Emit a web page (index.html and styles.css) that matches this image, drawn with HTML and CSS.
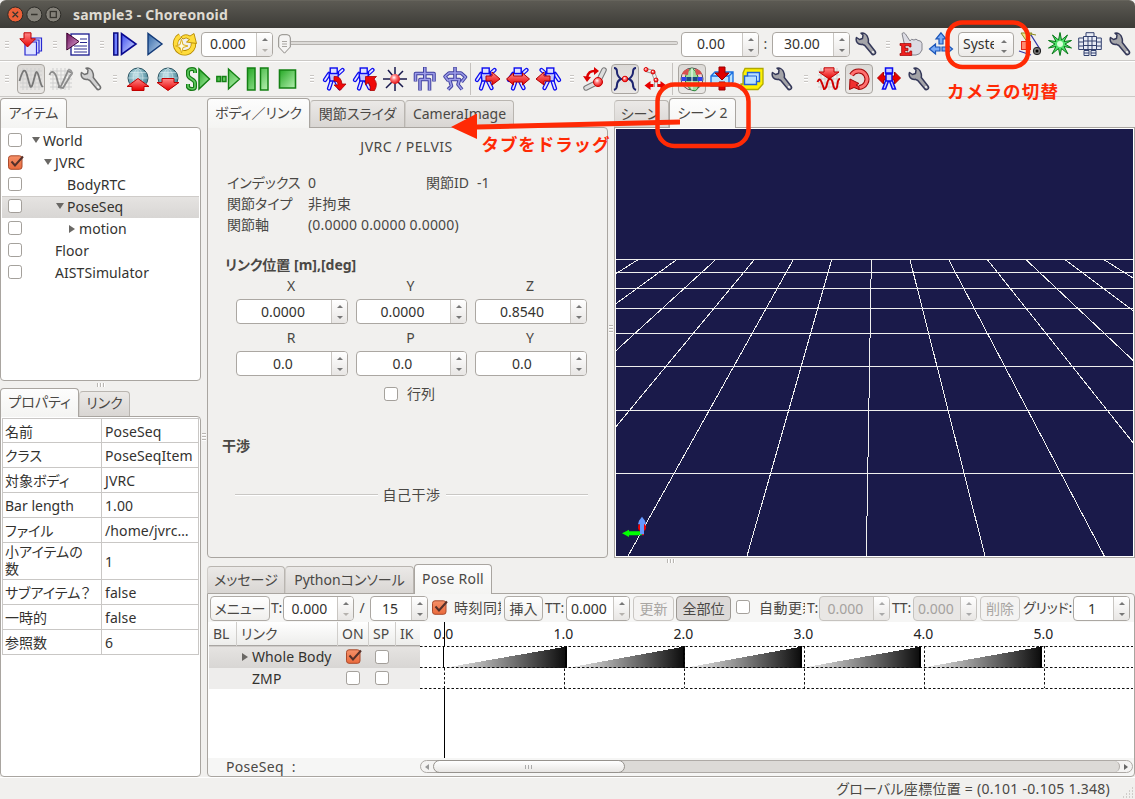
FILE: index.html
```html
<!DOCTYPE html>
<html lang="ja">
<head>
<meta charset="utf-8">
<title>sample3 - Choreonoid</title>
<link rel="stylesheet" href="styles.css">
</head>
<body>
<svg class="defs" width="0" height="0">
  <defs>
    <linearGradient id="gRed" x1="0" y1="0" x2="0" y2="1"><stop offset="0" stop-color="#ff8a8a"/><stop offset="1" stop-color="#e80000"/></linearGradient>
    <linearGradient id="gGreen" x1="0" y1="0" x2="1" y2="1"><stop offset="0" stop-color="#25a825"/><stop offset="1" stop-color="#b5f0b0"/></linearGradient>
    <linearGradient id="gBlue" x1="0" y1="0" x2="1" y2="1"><stop offset="0" stop-color="#3b4cf0"/><stop offset="1" stop-color="#dfe6ff"/></linearGradient>
    <linearGradient id="gSteel" x1="0" y1="0" x2="1" y2="1"><stop offset="0" stop-color="#2f66a8"/><stop offset="1" stop-color="#c5d8ee"/></linearGradient>
    <linearGradient id="gPurple" x1="0" y1="0" x2="1" y2="1"><stop offset="0" stop-color="#6b1058"/><stop offset="1" stop-color="#e0a8d8"/></linearGradient>
    <radialGradient id="gBall" cx=".4" cy=".35" r=".7"><stop offset="0" stop-color="#fff"/><stop offset=".35" stop-color="#ff8080"/><stop offset="1" stop-color="#e00000"/></radialGradient>
    <radialGradient id="gGlobe" cx=".4" cy=".35" r=".7"><stop offset="0" stop-color="#c8e4ea"/><stop offset="1" stop-color="#3d7f92"/></radialGradient>
    <linearGradient id="ramp" x1="0" x2="1"><stop offset="0" stop-color="#f4f4f4"/><stop offset="1" stop-color="#0a0a0a"/></linearGradient>
    <linearGradient id="check" x1="0" y1="0" x2="0" y2="1"><stop offset="0" stop-color="#f59068"/><stop offset="1" stop-color="#ea6a3c"/></linearGradient>
    <symbol id="wrench" viewBox="0 0 24 24"><path d="M7 1.2 9 3 8.500 6.500 5.500 7.500 2.500 5.500C1.200 9.500 4 13 8.500 12.300L10.800 13.500 17.500 21.500C19 23.800 22.500 22.300 21.300 19.500L14.300 10.500C14.300 9 14.800 8.500 14 6 13 2.500 10 .6 7 1.200Z" stroke-width="1.500" stroke-linejoin="round"/><circle cx="19" cy="20" r=".9" fill="#fff" stroke="none"/></symbol>
    <symbol id="robot" viewBox="0 0 24 24"><g fill="none" stroke-linecap="round" stroke-linejoin="round"><path d="M7 7 3 13M16 7 20.500 3M9.500 14 7 21.500M14 14l3.500 7" stroke="#0b0bf0" stroke-width="4.200"/><path d="M7 7 3 13M16 7 20.500 3M9.500 14 7 21.500M14 14l3.500 7" stroke="#e3e5ff" stroke-width="1.700"/></g><path d="M7 5.500h9.500l-1 8.500H8z" fill="#c3c6ff" stroke="#0b0bf0" stroke-width="1.400"/><rect x="8.200" y="1" width="7" height="5.500" fill="#dfe1ff" stroke="#0b0bf0" stroke-width="1.400"/></symbol>
    <symbol id="globe" viewBox="0 0 24 24"><circle cx="12" cy="11" r="10" fill="url(#gGlobe)" stroke="#2d5665"/><path d="M12 1v20M2 11h20M4 5.500h16M4 16.500h16M12 1C5.500 6 5.500 16 12 21M12 1c6.500 5 6.500 15 0 20" fill="none" stroke="#e3f2f5" stroke-width=".7" opacity=".75"/></symbol>
    <symbol id="box" viewBox="0 0 15 15"><rect x=".5" y=".5" width="14" height="14" rx="2.500" fill="#fff" stroke="#9a9690"/></symbol>
    <symbol id="boxon" viewBox="0 0 16 15"><rect x=".5" y=".8" width="13.500" height="13.500" rx="2.500" fill="url(#check)" stroke="#a84a2c"/><path d="M3.500 6.500 7 10.500 15 1.500" fill="none" stroke="#54302a" stroke-width="2"/></symbol>
    <symbol id="grid" viewBox="0 0 24 24"><path d="M1 4h22M1 8h22M1 12h22M1 16h22M1 20h22M4 1v22M8 1v22M12 1v22M16 1v22M20 1v22" stroke="#cfcfcf" fill="none" stroke-width="1"/></symbol>
  </defs>
</svg>

<div class="window">
  <header class="titlebar">
    <svg width="64" height="28"><g stroke="#2c2b27"><circle cx="15.300" cy="14.500" r="7.500" fill="#ec6038"/><circle cx="34.300" cy="14.500" r="7.500" fill="#85827a"/><circle cx="53.300" cy="14.500" r="7.500" fill="#85827a"/></g><g fill="none" stroke="#37352f" stroke-width="1.300"><path d="m12.500 11.700 5.600 5.600m0-5.600-5.600 5.600M31 14.500h6.600"/><rect x="50.300" y="11.500" width="6" height="6"/></g></svg>
    <span class="title">sample3 - Choreonoid</span>
  </header>

  <div class="toolbar">
    <i class="grip first"></i>
    <span class="ic"><svg viewBox="0 0 24 24"><g fill="#dfe4ff" stroke="#2828d0" stroke-width="1.200"><path d="M12 6h10.500v13H12z"/><path d="M9 8h11v13H9z"/><path d="M6 10h11.500v13H6z"/></g><path d="M5 .8h7v6h4.500L8.500 15 .8 6.800H5z" fill="url(#gRed)" stroke="#c00000"/></svg></span>
    <i class="grip"></i>
    <span class="ic"><svg viewBox="0 0 24 24"><rect x="5" y="2" width="18" height="21" fill="#fff" stroke="#1a1a90" stroke-width="1.300"/><path d="M14 7h7M14 10.500h7M8 14h13M8 17h13M8 20h13" stroke="#2a2a90"/><path d="M.8 1v17L13 9.500z" fill="url(#gPurple)" stroke="#3c0030"/></svg></span>
    <i class="grip"></i>
    <span class="ic"><svg viewBox="0 0 24 24"><rect x=".8" y="1" width="4" height="22" fill="#6f80ff" stroke="#0a0a80" stroke-width="1.500"/><path d="M8.500 1.500v21L23 12z" fill="url(#gBlue)" stroke="#0a0a90" stroke-width="1.600"/></svg></span>
    <span class="ic"><svg viewBox="0 0 24 24"><path d="M5 1.500v21L19 12z" fill="url(#gSteel)" stroke="#123a78" stroke-width="1.400"/></svg></span>
    <span class="ic"><svg viewBox="0 0 24 24"><path d="M7 4A9 9 0 1 0 20.500 11" fill="none" stroke="#b58900" stroke-width="5.500"/><path d="M7 4A9 9 0 1 0 20.500 11" fill="none" stroke="#ffdc3c" stroke-width="3.800"/><path d="M8 5Q12 1 17 4l4-2.500 2.500 10-10-1.500 3-2.500Q13 4.500 10 7z" fill="#ffdc3c" stroke="#b58900" stroke-width=".9"/><path d="m8.500 7 1.500 5.700L15 14l-5 1.500L8.500 21 7 15.500 2.500 14 7 12.700z" fill="#fffbe0" stroke="#dbae1d"/></svg></span>
    <span class="spin w72 ml1"><b>0.000</b><i class="ar dn-off"></i></span>
    <span class="slider"><i class="track"></i><svg width="13" height="20" viewBox="0 0 13 20"><path d="M4 .7h5q3.300 0 3.300 3.300v9L6.500 19.200.7 13V4Q.7.700 4 .7z" fill="#f5f4f3" stroke="#8d8a86"/><path d="M4 7.500h5M4 10h5M4 12.500h5" stroke="#a9a6a2"/></svg></span>
    <span class="spin w78"><b>0.00</b><i class="ar"></i></span>
    <span class="colon">:</span>
    <span class="spin w78"><b>30.00</b><i class="ar"></i></span>
    <span class="ic ml1"><svg class="tool"><use href="#wrench"/></svg></span>
    <i class="grip narrow"></i>
    <span class="ic"><svg viewBox="0 0 24 24"><path d="M3 1.500Q5-.5 6.500 2L11 9q1-3 4-1 2-2 4 .5 3-.5 4 3V18q-2 5-6 5h-7L6 15z" fill="#dcdce4" stroke="#84848c"/><path d="M1 11.500h11V15H10.500L10 13.700H6v2.600h3V18.500H6v2.300h4.500L11 19h1.700v4.500H1v-2h1.600v-8H1z" fill="#f02020" stroke="#a00000" stroke-width=".7"/></svg></span>
    <span class="ic"><svg viewBox="0 0 24 24"><path d="m12 .8 5 6h-3V12h-4V6.800H7zM.5 17l6-5v3H11v4H6.500v3zM23.500 17l-6-5v3H13v4h4.500v3z" fill="#79aaf5" stroke="#1a55b8" stroke-width="1.200"/></svg></span>
    <span class="combo"><b>Syste</b><i class="ar"></i></span>
    <span class="ic"><svg viewBox="0 0 24 24"><path d="M3 1h11L8.500 9zM8 1l10 2" fill="#eee68a" stroke="#8e8c20"/><rect x="3.500" y="9.500" width="9" height="8" fill="#ff8b70" stroke="#e02818"/><path d="m13 3 9.500 15M1 19l12 4" stroke="#3035a5" stroke-width="1.300" fill="none"/><circle cx="19" cy="19" r="3.700" fill="#777" stroke="#222"/><circle cx="19" cy="19" r="1.500"/></svg></span>
    <span class="ic"><svg viewBox="0 0 24 24"><path d="m12 .5 1.500 7.500L19.500 3 16 9.500l7.500-1L17 12l6.500 4-7.500-1.500L20 22l-6.500-5.500L12 23.500 10.500 16.500 4 22l4-7.500L.5 16 7 12 .5 8.500l7.500 1L4.500 3l6 5z" fill="#4fe06a" stroke="#087818" stroke-linejoin="round"/><circle cx="12" cy="12" r="3" fill="#d8ffd8"/></svg></span>
    <span class="ic"><svg viewBox="0 0 24 24"><g fill="#e8ecf6" stroke="#33406e"><path d="M8 .7h8v3.800H8zM5.500 4.500h13v13h-13zM.7 6h4.800v11.500H.7zM18.500 6h4.800v11.500h-4.800zM6 18.500h5v5H6zM13 18.500h5v5h-5z"/><path d="M5.500 9h13M5.500 13.500h13M10 4.500v13M14 4.500v13M1 10h4M1 14h4M19 10h4M19 14h4M6 21h5M13 21h5" fill="none"/></g></svg></span>
    <span class="ic"><svg class="tool"><use href="#wrench"/></svg></span>
  </div>

  <div class="toolbar second">
    <i class="grip first"></i>
    <span class="ic on"><svg viewBox="0 0 24 24"><use href="#grid"/><path d="M.5 14C3 5 5.500-1 8 8s3.500 17 6 8 3-14 5-9 3 14 5 12" fill="none" stroke="#777" stroke-width="1.800"/></svg></span>
    <span class="ic"><svg viewBox="0 0 24 24"><use href="#grid"/><path d="M.5 8C2 3 6 4 8 12s3 10 5 5L19 4l4 2-9 15-5-1" fill="none" stroke="#8a8a8a" stroke-width="1.800"/><path d="M19 3q4-1 4 4l-3 3" fill="none" stroke="#999" stroke-width="1.500"/></svg></span>
    <span class="ic"><svg class="tool grey"><use href="#wrench"/></svg></span>
    <i class="grip"></i>
    <span class="ic"><svg viewBox="0 0 24 24"><use href="#globe"/><path d="m12 11.500 11 8h-5v4H6v-4H1z" fill="url(#gRed)" stroke="#c00000"/></svg></span>
    <span class="ic"><svg viewBox="0 0 24 24"><use href="#globe"/><path d="m12 23.500 11-8h-5v-4H6v4H1z" fill="url(#gRed)" stroke="#c00000"/></svg></span>
    <span class="ic"><svg viewBox="0 0 24 24"><path d="M9 6V4Q9 2 6 2T2 4v4q0 2 3.500 4T9 16v4q0 2-3 2t-4-2v-3" fill="none" stroke="#187a18" stroke-width="4"/><path d="M9 6V4Q9 2 6 2T2 4v4q0 2 3.500 4T9 16v4q0 2-3 2t-4-2v-3" fill="none" stroke="#60cc60" stroke-width="1.600"/><path d="M13 2v20l10.500-10z" fill="url(#gGreen)" stroke="#148014" stroke-width="1.500"/></svg></span>
    <span class="ic"><svg viewBox="0 0 24 24"><path d="M.8 9.500h3.700v5H.8zM6.300 9.500H10v5H6.300zM12.500 2v20L23.500 12z" fill="url(#gGreen)" stroke="#148014" stroke-width="1.400"/></svg></span>
    <span class="ic"><svg viewBox="0 0 24 24"><path d="M1.500 1h7.500v22H1.500zM14.500 1H22v22h-7.500z" fill="url(#gGreen)" stroke="#148014" stroke-width="1.500"/></svg></span>
    <span class="ic"><svg viewBox="0 0 24 24"><path d="M3.500 3h16v18h-16z" fill="url(#gGreen)" stroke="#148014" stroke-width="1.600"/></svg></span>
    <i class="grip"></i>
    <span class="ic"><svg viewBox="0 0 24 24"><use href="#robot" x="-1"/><path d="M11 9.500q7-1 8 7.500h4l-6 6.500-6-5.500h4q0-4.500-4-4z" fill="#f00808" stroke="#a00" stroke-width=".8"/></svg></span>
    <span class="ic"><svg viewBox="0 0 24 24"><use href="#robot" x="-1"/><path d="M17 23.500h4.500q4-7-.500-11.500l2.500-2.500H12.500V18l2.800-2.500q3 3.500 1.700 8z" fill="#f00808" stroke="#a00" stroke-width=".8"/></svg></span>
    <span class="ic"><svg viewBox="0 0 24 24"><path d="M12 0v24M0 12h24M3 21 20 4M5 3l5 6M14 14l6 6" stroke="#18184c" stroke-width="1.500"/><circle cx="12" cy="12" r="5" fill="url(#gBall)"/></svg></span>
    <span class="ic"><svg viewBox="0 0 24 24"><g fill="none" stroke-linejoin="round"><path d="M2.500 14.500V6.500h18.500v8M7 23.500V12.500h9.500v11M11.800 0v12" stroke="#4040a0" stroke-width="3.600"/><path d="M2.500 14V6.500h18.500V14M7 23V12.500h9.500V23M11.800 .5v12" stroke="#9c9ce8" stroke-width="1.600"/></g></svg></span>
    <span class="ic"><svg viewBox="0 0 24 24"><g fill="none" stroke-linejoin="round"><path d="M5.500 14 2 9.500l4-3.500h12l4.500 4-4 5M12 0v12M5 22.500l3.500-3.500-2-6.500h10l-1.500 5 4 5" stroke="#4040a0" stroke-width="3.600"/><path d="M5.500 14 2 9.500l4-3.500h12l4.500 4-4 5M12 .5v12M5 22.500l3.500-3.500-2-6.500h10l-1.500 5 4 5" stroke="#9c9ce8" stroke-width="1.600"/></g></svg></span>
    <i class="sep"></i>
    <span class="ic"><svg viewBox="0 0 24 24"><use href="#robot" x="-2"/><path d="M10 9h6V5l8 7-8 6v-4h-6z" fill="url(#gRed)" stroke="#b00000"/></svg></span>
    <span class="ic"><svg viewBox="0 0 24 24"><use href="#robot"/><path d="m.5 12 7-6v3h9V6l7 6-7 6v-3h-9v3z" fill="url(#gRed)" stroke="#b00000"/></svg></span>
    <span class="ic"><svg viewBox="0 0 24 24"><use href="#robot" transform="translate(26 0) scale(-1 1)"/><path d="M14 9H8V5l-8 7 8 6v-4h6z" fill="url(#gRed)" stroke="#b00000"/></svg></span>
    <i class="grip"></i>
    <span class="ic"><svg viewBox="0 0 24 24"><path d="M3 21 15 15 21 3" fill="none" stroke="#777" stroke-width="5.500" stroke-linecap="round"/><path d="M3 21 15 15 21 3" fill="none" stroke="#ddd" stroke-width="3.500" stroke-linecap="round"/><circle cx="15" cy="15" r="4.500" fill="url(#gBall)" stroke="#c00"/><path d="M4 11Q5 3 13 4" fill="none" stroke="#d00" stroke-width="2.500"/><path d="m11 0 5 4-5 4zM0 9l8 1-4 5z" fill="#d00"/></svg></span>
    <span class="ic on"><svg viewBox="0 0 24 24"><path d="M1 1Q4 1 4 5t4 7Q4 14 4 18t-3 5M23 1q-3 0-3 4t-4 7q4 2 4 6t3 5M8 12h8" fill="none" stroke="#1d2470" stroke-width="2"/><circle cx="12" cy="12" r="2.800" fill="url(#gBall)" stroke="#d00"/></svg></span>
    <span class="ic"><svg viewBox="0 0 24 24"><path d="M3 3 10 5 13 13v7" fill="none" stroke="#999" stroke-width="4"/><path d="M3 3 10 5 13 13v7" fill="none" stroke="#eee" stroke-width="2.200"/><g fill="url(#gBall)" stroke="#d00"><circle cx="3" cy="2.500" r="2"/><circle cx="10" cy="5" r="2"/><circle cx="13" cy="13" r="2"/></g><path d="m1.500 18.500 6-4.500v3h3v3h-3v3zM23.500 18.500l-6-4.500v3h-3v3h3v3z" fill="#e80000"/></svg></span>
    <i class="sep wide"></i>
    <span class="ic on"><svg viewBox="0 0 24 24"><circle cx="12" cy="12" r="11" fill="#f8d0d0" stroke="#555"/><path d="M12 1C3 6 3 18 12 23s9-17 0-22z" fill="#a0dca0" stroke="#208030"/><path d="M2 7Q4 2 9 2L8 8zM22 7q-2-5-7-5l1 6z" fill="#d85050"/><path d="M1.500 10h5v4h-5zM17.500 10h5v4h-5z" fill="#3040f0"/><path d="M6.500 10h11v4h-11z" fill="#1a4a80"/><path d="M12 1v22" stroke="#fff"/></svg></span>
    <span class="ic"><svg viewBox="0 0 24 24"><path d="m1 9 4-4h18v10l-4 4H1zM1 9h18v10M19 9l4-4" fill="#b8e2ff" stroke="#1c70e0" stroke-width="1.400"/><path d="M9 0h6v6h4l-7 7-7-7h4zM9 15h6v8H9z" fill="#e00000" stroke="#900"/></svg></span>
    <span class="ic"><svg viewBox="0 0 24 24"><path d="M5 1.500h18V17l-5 5.500H1V17h2V6z" fill="#fff200" stroke="#b0a800" stroke-width="1.300"/><path d="M7.500 5.500h12v9h-3v3H4.500V9h3z" fill="#b9e0ff" stroke="#2060d8" stroke-width="1.400"/><path d="M8 9h8.500v5.500" fill="none" stroke="#2060d8"/></svg></span>
    <span class="ic"><svg class="tool"><use href="#wrench"/></svg></span>
    <i class="grip"></i>
    <span class="ic"><svg viewBox="0 0 24 24"><use href="#grid"/><path d="M.5 15q2-5 4 0t2.500 7q2 0 3-5t3-5 3 5 2.500 5 2-5 2.500-5" fill="none" stroke="#d00000" stroke-width="2"/><path d="M7 .8h10V5h5l-10 7L2 5h5z" fill="url(#gRed)" stroke="#c00000"/></svg></span>
    <span class="ic on"><svg viewBox="0 0 24 24"><path d="M4.500 8A8.300 8.300 0 1 1 12 20.500" fill="none" stroke="#a00808" stroke-width="5"/><path d="M4.500 8A8.300 8.300 0 1 1 12 20.500" fill="none" stroke="#ff7070" stroke-width="3"/><path d="m2.500 22.500.500-10.500 9 4.500-3 1.500 3 1.500v3L7 20.500z" fill="#f03030" stroke="#a00808"/></svg></span>
    <span class="ic"><svg viewBox="0 0 24 24"><path d="m.5 11 6-6v4h11V5l6 6-6 6v-4h-11v4z" fill="#e80000" stroke="#a00"/><g fill="#c8ccff" stroke="#0b0bf0" stroke-width="1.500"><path d="M8.500 1h7v5h-7zM9 7h6v7H9zM8.500 14 5.500 22h3l3-8zM15.500 14l3 8h-3l-3-8z"/></g></svg></span>
    <span class="ic"><svg class="tool"><use href="#wrench"/></svg></span>
  </div>

  <main class="main">
    <aside class="left">
      <div class="tabs"><span class="tab active t-item">アイテム</span></div>
      <section class="panel tree">
        <div class="row"><svg class="cb"><use href="#box"/></svg><i class="open"></i>World</div>
        <div class="row l1"><svg class="cb ck"><use href="#boxon"/></svg><i class="open"></i>JVRC</div>
        <div class="row l2"><svg class="cb"><use href="#box"/></svg><i class="none"></i>BodyRTC</div>
        <div class="row l2 sel"><svg class="cb"><use href="#box"/></svg><i class="open"></i>PoseSeq</div>
        <div class="row l3"><svg class="cb"><use href="#box"/></svg><i class="shut"></i>motion</div>
        <div class="row l1"><svg class="cb"><use href="#box"/></svg><i class="none"></i>Floor</div>
        <div class="row l1"><svg class="cb"><use href="#box"/></svg><i class="none"></i>AISTSimulator</div>
      </section>
      <div class="hhandle"><i></i></div>
      <div class="tabs small"><span class="tab active t-prop">プロパティ</span><span class="tab t-link">リンク</span></div>
      <section class="panel props">
        <div class="prop"><span>名前</span><span>PoseSeq</span></div>
        <div class="prop"><span>クラス</span><span>PoseSeqItem</span></div>
        <div class="prop"><span>対象ボディ</span><span>JVRC</span></div>
        <div class="prop"><span>Bar length</span><span>1.00</span></div>
        <div class="prop"><span>ファイル</span><span>/home/jvrc…</span></div>
        <div class="prop tall"><span>小アイテムの<br>数</span><span>1</span></div>
        <div class="prop"><span>サブアイテム？</span><span>false</span></div>
        <div class="prop"><span>一時的</span><span>false</span></div>
        <div class="prop"><span>参照数</span><span>6</span></div>
      </section>
    </aside>
    <div class="vhandle v1"><i></i></div>

    <div class="right">
      <div class="upper">
        <div class="center">
          <div class="tabs"><span class="tab active t-body">ボディ／リンク</span><span class="tab t-joint">関節スライダ</span><span class="tab t-cam">CameraImage</span></div>
          <section class="panel form">
            <div class="ftitle">JVRC / PELVIS</div>
            <div class="info"><span>インデックス</span><span>0</span><span>関節ID</span><span>-1</span></div>
            <div class="info"><span>関節タイプ</span><span class="kj">非拘束</span></div>
            <div class="info"><span>関節軸</span><span class="vec">(0.0000 0.0000 0.0000)</span></div>
            <div class="fhead">リンク位置 [m],[deg]</div>
            <div class="axes"><span>X</span><span>Y</span><span>Z</span></div>
            <div class="trio"><span class="spin"><b>0.0000</b><i class="ar"></i></span><span class="spin"><b>0.0000</b><i class="ar"></i></span><span class="spin"><b>0.8540</b><i class="ar"></i></span></div>
            <div class="axes next"><span>R</span><span>P</span><span>Y</span></div>
            <div class="trio"><span class="spin"><b>0.0</b><i class="ar"></i></span><span class="spin"><b>0.0</b><i class="ar"></i></span><span class="spin"><b>0.0</b><i class="ar"></i></span></div>
            <div class="matrix"><svg class="cb"><use href="#box"/></svg>行列</div>
            <div class="fhead2">干渉</div>
            <div class="rule"><i></i><span class="kj">自己干渉</span><i></i></div>
          </section>
        </div>
        <div class="vhandle v2"><i></i></div>
        <div class="scene">
          <div class="tabs"><span class="tab t-s1">シーン</span><span class="tab active t-s2">シーン 2</span></div>
          <section class="panel view">
            <svg width="517" height="427" viewBox="18 -333 1551 1281">
              <g stroke="#efefef" stroke-width="3" fill="none" shape-rendering="crispEdges">
                <path d="M18 58.500H1569M18 97.500H1569M18 145.500H1569M18 205.500H1569M18 280.500H1569M18 379.500H1569M18 511.500H1569M18 700.500H1569"/>
                <path d="M84 59 18 101M200 59 18 191M317 59 18 332M433 59 18 560M550 59 54 948M665 59 411 948M784 59 769 948M900 59l225 889M1016 59l467 889M1132 59l437 549M1248 59l321 302M1365 59l204 153M1482 59l87 55"/>
              </g>
              <g><circle cx="96" cy="862" r="12" fill="#f00000"/><path d="M96 880h6v6h-6z" fill="#f00"/><path d="M36 880l21-11v5h38v12H57v5z" fill="#0f0"/><path d="M96 830l9 12 3 11h-6v30H90v-30h-6l3-11z" fill="#6699ff"/></g>
            </svg>
          </section>
        </div>
      </div>
      <div class="hhandle h2"><i></i></div>
      <div class="lower">
        <div class="tabs"><span class="tab t-msg">メッセージ</span><span class="tab t-py">Pythonコンソール</span><span class="tab active t-pose">Pose Roll</span></div>
        <section class="panel roll">
          <div class="rollbar">
            <span class="btn c1">メニュー</span><span class="lb c2">T:</span><span class="spin c3"><b>0.000</b><i class="ar dn-off"></i></span><span class="lb c4">/</span><span class="spin c5"><b>15</b><i class="ar"></i></span>
            <svg class="cb ck c6"><use href="#boxon"/></svg><span class="lb c7">時刻同期</span><span class="btn c8">挿入</span><span class="lb c9">TT:</span><span class="spin c10"><b>0.000</b><i class="ar dn-off"></i></span><span class="btn off c11">更新</span><span class="btn pressed c12">全部位</span>
            <svg class="cb c13"><use href="#box"/></svg><span class="lb c14">自動更新</span><span class="lb c15">T:</span><span class="spin off c16"><b>0.000</b><i class="ar"></i></span><span class="lb c17">TT:</span><span class="spin off c18"><b>0.000</b><i class="ar"></i></span><span class="btn off c19">削除</span><span class="lb c20">グリッド:</span><span class="spin c21"><b>1</b><i class="ar"></i></span>
          </div>
          <div class="rollbody">
            <div class="parts">
              <div class="phead"><span>BL</span><span>リンク</span><span>ON</span><span>SP</span><span>IK</span></div>
              <div class="prow sel"><i class="shut"></i><span>Whole Body</span><svg class="cb ck"><use href="#boxon"/></svg><svg class="cb"><use href="#box"/></svg></div>
              <div class="prow"><i class="none"></i><span>ZMP</span><svg class="cb"><use href="#box"/></svg><svg class="cb"><use href="#box"/></svg></div>
            </div>
            <svg class="timeline" width="713" height="136" viewBox="420 622 713 136">
              <g fill="url(#ramp)" shape-rendering="crispEdges"><path d="M446 667.500 567 646.500v21z"/><path d="M569 667.500 685 646.500v21z"/><path d="M687 667.500 802 646.500v21z"/><path d="M804 667.500 921 646.500v21z"/><path d="M923 667.500 1042 646.500v21z"/></g>
              <g shape-rendering="crispEdges" fill="#000"><path d="M565 646h2v22h-2zM683 646h2v22h-2zM800 646h2v22h-2zM919 646h2v22h-2zM1040 646h2v22h-2z"/></g>
              <g stroke="#111" stroke-dasharray="2.500 2" fill="none"><path d="M420 646.500h713M420 667.500h713M420 688.500h713M444.500 668v20M564.500 646v42M684.500 646v42M804.500 646v42M924.500 646v42M1044.500 646v42"/></g>
              <path d="M444.500 622v24M443.500 646v22M444.500 688v70" stroke="#000"/>
              <g class="ticks"><text x="443.500" y="639">0.0</text><text x="563.500" y="639">1.0</text><text x="683.500" y="639">2.0</text><text x="803.500" y="639">3.0</text><text x="923.500" y="639">4.0</text><text x="1043.500" y="639">5.0</text></g>
            </svg>
          </div>
          <div class="rollfoot"><span class="fname">PoseSeq&nbsp; :</span><span class="scroll"><i class="sl"></i><i class="thumb"><u></u></i><i class="rest"></i><i class="sr"></i></span></div>
        </section>
      </div>
    </div>
  </main>
  <footer class="status"><span>グローバル座標位置 = (0.101 -0.105 1.348)</span><svg width="12" height="12"><path d="M10 1h1M7 4h1m2 0h1M4 7h1m2 0h1m2 0h1M1 10h1m2 0h1m2 0h1m2 0h1" stroke="#c4c1bd" stroke-width="1.500"/></svg></footer>

  <svg class="notes" width="1135" height="799">
    <g fill="none" stroke="#ff2a05" stroke-width="4.500"><rect x="947.500" y="22.500" width="80.500" height="44.500" rx="15"/><rect x="657.500" y="84.500" width="91" height="61.500" rx="17"/></g>
    <path d="M451 127 477 113.500v11L680 119.500v5L477 129.500V139z" fill="#ff2a05"/>
    <text x="481.500" y="150.500" textLength="128">タブをドラッグ</text>
    <text x="947" y="98" textLength="111">カメラの切替</text>
  </svg>
</div>
</body>
</html>
```
FILE: styles.css
```css
* { box-sizing: border-box; }
body { margin: 0; overflow: hidden; }
.defs { position: absolute; }
.window {
  position: relative; width: 1135px; height: 799px; display: flex; flex-direction: column;
  background: #f1f0ee; color: #4a4845; overflow: hidden;
  font: 14px/20px "Noto Sans", "Noto Sans CJK JP", sans-serif; font-feature-settings: "palt"; white-space: nowrap;
}
i { font-style: normal; flex: none; }
b { font-weight: normal; }
svg { display: block; flex: none; }

.titlebar { height: 28px; display: flex; background: linear-gradient(#5c5a53, #3c3b37); border-top: 1px solid #66645c; border-radius: 6px 6px 0 0; }
.titlebar svg { margin-top: -1px; }
.title { margin-left: 9px; line-height: 27px; font-weight: bold; color: #dfdbd2; letter-spacing: .2px; }

.toolbar { height: 33px; display: flex; align-items: center; border-bottom: 1px solid #cbc9c6; }
.toolbar.second { height: 36px; border-top: 1px solid #fff; padding-bottom: 1px; }
.grip { width: 17px; height: 9px; background: linear-gradient(#c9c6c3 1px, #fff 1px 2px, transparent 2px) 7px 1px / 4px 3px repeat-y; background-clip: content-box; }
.grip.first { width: 16px; background-position-x: 5px; }
.grip.narrow { width: 15px; background-position-x: 5px; }
.ic { flex: none; width: 30px; height: 30px; display: flex; align-items: center; justify-content: center; }
.ic svg { width: 24px; height: 24px; overflow: visible; }
.ic.on { width: 28px; margin: 0 1px; border: 1px solid #a9a5a0; border-radius: 4px; background: linear-gradient(#dcdad7, #eae8e6); }
.tool { fill: #a4a4a8; stroke: #343859; }
.tool.grey { fill: #d2d2d2; stroke: #707070; }
.sep { width: 3px; height: 32px; border-left: 1px solid #c4c1be; }
.sep.wide { width: 5px; margin-left: 2px; }
.ml1 { margin-left: 1px; }
.w72 { width: 72px; }
.w78 { width: 78px; }

.spin { flex: none; display: flex; height: 25px; border: 1px solid #aba7a2; border-radius: 4px; background: #fff; overflow: hidden; color: #33322f; }
.spin b { flex: 1; text-align: center; line-height: 23px; padding-right: 2px; }
.toolbar .spin b { line-height: 22px; }
.ar { width: 16px; border-left: 1px solid #c9c6c2; background: linear-gradient(#fff, #e8e6e4); display: flex; flex-direction: column; align-items: center; justify-content: space-between; padding: 5px 0 4px; }
.ar::before, .ar::after { content: ""; border: 3px solid transparent; }
.ar::before { border-top: 0; border-bottom-color: #777; }
.ar::after { border-bottom: 0; border-top-color: #777; }
.ar.dn-off::after { border-top-color: #b5b2ae; }
.spin.off { background: #e9e7e5; border-color: #c6c3bf; color: #a5a29f; }
.spin.off .ar::before { border-bottom-color: #aaa; }
.spin.off .ar::after { border-top-color: #aaa; }
.slider { width: 400px; margin: 0 3px 0 5px; height: 20px; display: flex; align-items: center; }
.slider svg { order: -1; }
.track { flex: 1; height: 4px; border: 1px solid #b5b2ae; border-left: 0; background: #dddbd8; border-radius: 0 3px 3px 0; margin-top: -3px; }
.colon { width: 13px; text-align: center; }
.combo { width: 56px; height: 25px; margin: 0 1px 0 2px; flex: none; display: flex; border: 1px solid #aba7a2; border-radius: 4px; background: linear-gradient(#fff, #eceae8); color: #33322f; }
.combo b { width: 31px; margin-left: 4px; overflow: hidden; line-height: 22px; }
.combo .ar { border: 0; background: none; width: 18px; padding: 7px 0 3px 1px; }

.main { height: 680px; display: flex; }
.left { width: 201px; display: flex; flex-direction: column; }
.tabs { height: 30px; display: flex; align-items: flex-end; }
.tabs.small { height: 28px; }
.tab { flex: none; height: 27px; line-height: 25px; text-align: center; border: 1px solid #b9b5b0; border-bottom: 0; border-left-color: #cfccc8; border-radius: 4px 4px 0 0; background: linear-gradient(#ebe9e7, #d9d6d3); }
.tab.active { height: 30px; line-height: 27px; margin-bottom: -1px; padding-bottom: 1px; position: relative; border-color: #a9a5a0; background: linear-gradient(#fdfdfd, #f4f4f2); }
.small .tab { height: 25px; line-height: 22px; }
.small .tab.active { height: 29px; line-height: 25px; }
.t-item { width: 67px; } .t-prop { width: 79px; } .t-link { width: 51px; }
.t-body { width: 103px; } .t-joint { width: 95px; } .t-cam { width: 109px; }
.t-s1 { width: 55px; padding-right: 3px; } .t-s2 { width: 67px; }
.t-msg { width: 78px; } .t-py { width: 129px; } .t-pose { width: 78px; letter-spacing: .25px; }
.panel { border: 1px solid #a9a5a0; border-radius: 0 4px 4px 4px; }
.hhandle { height: 7px; display: flex; justify-content: center; align-items: center; }
.hhandle i { width: 8px; height: 4px; background: repeating-linear-gradient(90deg, #bab7b3 0 1px, #fff 1px 2px, transparent 2px 3px); }
.vhandle { display: flex; justify-content: center; }
.vhandle i { width: 4px; height: 9px; background: repeating-linear-gradient(#bab7b3 0 1px, #fff 1px 2px, transparent 2px 3px); }
.v1 { width: 6px; padding-top: 336px; }
.v2 { width: 6px; padding-top: 228px; }

.tree { height: 254px; background: #fff; padding: 2px 1px; color: #33322f; letter-spacing: .08px; }
.row { height: 22px; display: flex; align-items: center; padding-left: 6px; }
.cb { width: 14px; height: 14px; }
.cb.ck { width: 16px; height: 15px; }
.row .cb { margin-right: 10px; margin-top: -2px; }
.row .ck { margin-right: 8px; }
.l1 .cb + i { margin-left: 12px; } .l2 .cb + i { margin-left: 24px; } .l3 .cb + i { margin-left: 36px; }
.sel { background: linear-gradient(#e6e4e2, #d8d6d4); box-shadow: inset 0 1px #cfccc9; }
.open, .shut, .none { width: 11px; height: 8px; }
.open::before, .shut::before { content: ""; display: block; width: 0; border: 4px solid transparent; }
.open::before { border-width: 6px 4px 0; border-top-color: #6a6865; }
.shut::before { border-width: 4px 0 4px 6px; border-left-color: #6a6865; margin-left: 1px; }

.props { flex: 1; background: #fff; padding: 1px; color: #33322f; }
.prop { display: grid; grid-template-columns: 98px 1fr; height: 25px; border: 1px solid #c9c7c5; border-top: 0; }
.prop:first-child { border-top: 1px solid #c9c7c5; }
.prop span { padding-left: 2px; line-height: 25px; }
.prop span + span { border-left: 1px solid #c9c7c5; padding-left: 3px; letter-spacing: .1px; }
.prop.tall { height: 37px; }
.prop.tall span { line-height: 17px; padding-top: 0; letter-spacing: .1px; }
.prop.tall span + span { line-height: 37px; }

.right { width: 928px; display: flex; flex-direction: column; }
.upper { height: 461px; display: flex; }
.center { width: 401px; }
.form { height: 431px; padding: 9px 0 0 27px; }
.ftitle { width: 343px; text-align: center; margin-bottom: 15px; letter-spacing: .45px; }
.info { display: grid; grid-template-columns: 81px 118px 51px auto; justify-content: start; line-height: 21px; margin-left: -8px; }
.vec { letter-spacing: .17px; }
.kj { letter-spacing: .5px; }
.fhead, .fhead2 { font-weight: bold; margin: 20px 0 1px -10px; }
.fhead2 { margin: 32px 0 29px -13px; }
.axes, .trio { display: grid; grid-template-columns: 112px 111px 112px; gap: 8px; margin: 3px 0 4px; }
.trio { margin-left: 1px; }
.axes { text-align: center; margin: 0 0 3px; }
.matrix { display: flex; gap: 9px; align-items: center; margin: 8px 0 0 149px; }
.rule { display: flex; align-items: center; width: 353px; gap: 5px; }
.rule i { flex: 1; height: 2px; background: linear-gradient(#c9c7c4 1px, #fff 1px); }
.scene { width: 521px; }
.view { height: 431px; padding: 1px 0 0 1px; background: #fff; border-radius: 0; overflow: hidden; }
.view svg { background: #1a1a4a; }

.h2 { height: 6px; }
.lower .tabs { height: 29px; }
.roll { height: 184px; background: #f6f6f5; padding-top: 2px; }
.rollbar { height: 26px; display: grid; grid-template-columns: 60px 13px 71px 16px 58px 4px 16px 6px 47px 3px 39px 2px 21px 64px 3px 41px 2px 55px 5px 14px 9px 46px 2px 12px 71px 2px 21px 64px 3px 40px 3px 47px 3px 57px; padding-left: 2px; align-items: start; }
.rollbar .spin { width: 100%; }
.rollbar .spin.c21 b { padding-right: 3px; }
.c6 { grid-column: 7; } .c7 { grid-column: 9; } .c8 { grid-column: 11; } .c9 { grid-column: 13; }
.c11 { grid-column: 16; } .c12 { grid-column: 18; } .c13 { grid-column: 20; } .c14 { grid-column: 22; } .c15 { grid-column: 24; }
.c16 { grid-column: 25; } .c17 { grid-column: 27; } .c18 { grid-column: 28; } .c19 { grid-column: 30; } .c20 { grid-column: 32; } .c21 { grid-column: 34; }
.rollbar .cb { margin-top: 4px; }
.lb { line-height: 24px; letter-spacing: -.2px; }
.c2 { padding-left: 1px; }
.c4 { text-align: center; }
.c7, .c14 { letter-spacing: .5px; overflow: hidden; }
.btn { height: 25px; line-height: 23px; text-align: center; border: 1px solid #b0aca7; border-radius: 4px; background: linear-gradient(#fff, #f0efed); }
.btn.off { color: #a9a6a3; border-color: #cac7c3; background: #f4f3f2; }
.btn.pressed { background: #dcd9d8; border-color: #9d9994; }
.rollbody { display: flex; height: 136px; background: #fff; }
.parts { width: 212px; padding-left: 1px; }
.phead { height: 24px; display: grid; grid-template-columns: 28px 101px 31px 27px 24px; line-height: 24px; background: linear-gradient(#fff, #ededeb); border-bottom: 1px solid #a9a6a3; }
.phead span { padding-left: 4px; border-right: 1px solid #d0cecb; }
.phead span:last-child { border: 0; }
.prow { height: 21px; display: grid; grid-template-columns: 11px 94px 29px 20px; padding-left: 32px; align-items: center; background: #eeedec; color: #33322f; letter-spacing: .1px; }
.prow .cb { margin-top: -1px; }
.prow.sel { height: 22px; background: linear-gradient(#e6e4e2, #d8d6d4); }
.timeline { width: 713px; margin-left: 0; background: #fff; }
.ticks { font: 14px "Noto Sans", sans-serif; text-anchor: middle; fill: #222; }
.rollfoot { height: 18px; display: flex; }
.fname { width: 212px; padding-left: 18px; line-height: 18px; letter-spacing: .3px; }
.scroll { width: 713px; height: 13px; margin-top: 2px; display: flex; border: 1px solid #aeaaa6; border-radius: 7px; background: #f4f3f2; }
.sl, .sr { width: 12px; display: flex; align-items: center; justify-content: center; }
.sl::before, .sr::before { content: ""; border: 3px solid transparent; border-width: 3px 4px 3px 0; border-right-color: #999; }
.sr::before { border-width: 3px 0 3px 4px; border-left-color: #666; }
.thumb { position: relative; z-index: 1; width: 192px; height: 13px; margin-top: -1px; border: 1px solid #96928d; border-radius: 7px; background: linear-gradient(#fff, #e8e6e4); display: flex; align-items: center; justify-content: center; }
.thumb u { width: 8px; height: 4px; background: repeating-linear-gradient(90deg, #aaa 0 1px, transparent 1px 3px); }
.rest { flex: 1; margin-left: -6px; padding-left: 6px; background: #dcdad7; border-right: 1px solid #aeaaa6; border-radius: 0 7px 7px 0; }

.status { height: 22px; border-top: 1px solid #fff; display: flex; justify-content: flex-end; align-items: center; gap: 12px; padding-right: 1px; letter-spacing: .27px; }
.status svg { align-self: flex-end; }
.notes { position: absolute; left: 0; top: 0; }
.notes text { font: bold 17.500px "Noto Sans CJK JP", sans-serif; fill: #ff2a05; }
```
